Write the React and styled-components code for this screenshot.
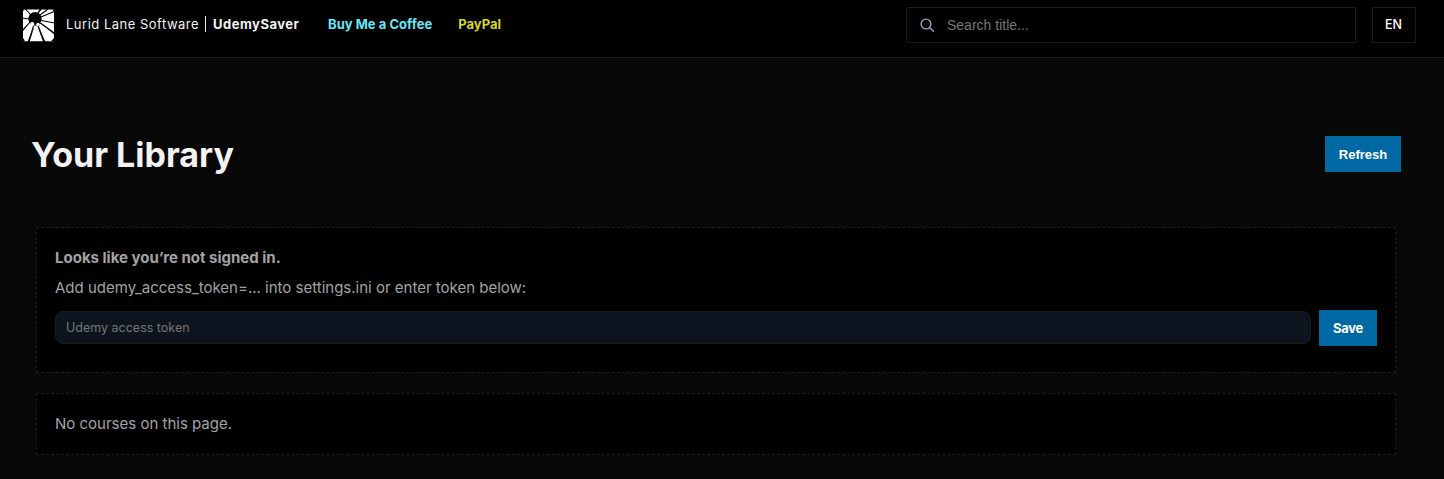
import React from "react";
import styled, { createGlobalStyle } from "styled-components";

const GlobalStyle = createGlobalStyle`
  * { box-sizing: border-box; }
  body {
    margin: 0;
    background: #080808;
    color: #f2f2f2;
    font-family: Inter, "Liberation Sans", sans-serif;
  }
`;

const Page = styled.div`
  min-height: 479px;
  overflow: hidden;
`;

const Header = styled.header`
  display: flex;
  align-items: flex-start;
  height: 58px;
  padding: 7px 28px 0 22px;
  background: #000;
  border-bottom: 1px solid #1a1a1a;
`;

const Brand = styled.div`
  display: flex;
  align-items: center;
  height: 34px;
  font-size: 13px;
  line-height: 18px;
  white-space: nowrap;
`;

const Logo = styled.svg`
  width: 34px;
  height: 34px;
  margin: 2px 10px 0 0;
`;

const Company = styled.span`
  width: 139px;
  letter-spacing: 0.5px;
`;

const Divider = styled.span`
  width: 1px;
  height: 16px;
  margin-right: 7px;
  background: #e8e8e8;
`;

const Product = styled.strong`
  width: 115px;
  font-weight: 700;
  letter-spacing: 0.5px;
`;

const HeaderLink = styled.a`
  position: relative;
  margin-right: 26px;
  color: ${(p) => p.$color};
  font-weight: 700;
  letter-spacing: 0.03px;
  text-decoration: none;
`;

const SearchBox = styled.label`
  display: flex;
  align-items: center;
  width: 450px;
  height: 36px;
  margin-left: auto;
  padding-left: 13px;
  border: 1px solid #1a1a1a;
  border-radius: 1px;
`;

const SearchIcon = styled.svg`
  width: 15px;
  height: 15px;
  margin-right: 12px;
`;

const SearchInput = styled.input`
  flex: 1;
  padding: 0;
  border: 0;
  outline: 0;
  background: transparent;
  color: #f2f2f2;
  font: 14px "Liberation Sans", Arial, sans-serif;
  &::placeholder { color: #757575; }
`;

const LanguageButton = styled.button`
  width: 44px;
  height: 36px;
  margin-left: 16px;
  padding: 0 1px 2px 0;
  border: 1px solid #1a1a1a;
  background: #000;
  color: #fff;
  font: 500 12.5px Inter, sans-serif;
`;

const Main = styled.main`
  padding: 78px 43px 0 31px;
`;

const TitleRow = styled.div`
  display: flex;
  align-items: center;
  justify-content: space-between;
  height: 36px;
`;

const Title = styled.h1`
  margin: 2px 0 0;
  font-size: 34px;
  font-weight: 700;
  line-height: 40px;
`;

const ActionButton = styled.button`
  flex: none;
  width: ${(p) => p.$width}px;
  height: 36px;
  padding: 0;
  border: 0;
  background: #0069a3;
  color: #fff;
  font: 700 13px ${(p) => p.$font}, sans-serif;
  letter-spacing: ${(p) => p.$tracking || 0}px;
`;

const Cards = styled.div`
  display: grid;
  gap: 20px;
  margin: 55px 5px 0;
`;

const Card = styled.section`
  height: ${(p) => p.$height}px;
  padding: 20px 18px;
  border: 1px dashed #1d1d1d;
  background: #000;
  color: #a3a3a3;
  font-size: 15px;
  line-height: 20px;
`;

const CardText = styled.p`
  margin: 0;
  font-weight: ${(p) => (p.$bold ? 700 : 400)};
  & + & { margin-top: 10px; }
`;

const TokenRow = styled.div`
  display: flex;
  align-items: flex-start;
  gap: 8px;
  margin-top: 12px;
`;

const TokenInput = styled.input`
  flex: 1;
  height: 33px;
  margin-top: 1px;
  padding: 0 10px;
  border: 1px solid #1a1a1a;
  border-radius: 8px;
  outline: 0;
  background: #0d1420;
  color: #f2f2f2;
  font: 12.5px Inter, sans-serif;
  &::placeholder { color: #757575; }
`;

export default function App() {
  return (
    <>
      <GlobalStyle />
      <Page>
        <Header>
          <Brand>
            <Logo viewBox="0 0 34 34">
              <path fill="#fff" d="M1 1.5H32V33.3H1Z" />
              <g stroke="#000" strokeWidth="1.1">
                <path d="M9 7 3.5 1M16 5 18.5 1M18 7 26 1M19 9 32 3.5M19 12.5 33 15M17 14 33 26M15 15 22.5 34M12.5 15 6.5 34M8 14 1 22M7 11 0 10" />
              </g>
              <path d="M16 6 20 1h-2ZM18 14l15 13v-2ZM15 17l6.2 17h2.3ZM12.5 18 5.5 34h2ZM8 14 1 21v2Z" />
              <circle cx="13" cy="10.7" r="6.7" />
              <path d="M9 14h8.5v4H16l-3-1-3 1H9Z" />
              <circle cx="10.2" cy="16.2" r="2.1" fill="#fff" />
              <circle cx="16" cy="16.4" r="1.7" fill="#fff" />
              <path d="M1 1.5h2L1 3ZM30 1.5h2v2ZM1 30l2 3.3H1ZM32 30v3.3h-3Z" />
            </Logo>
            <Company>Lurid Lane Software</Company>
            <Divider />
            <Product>UdemySaver</Product>
            <HeaderLink $color="#67e8f9">Buy Me a Coffee</HeaderLink>
            <HeaderLink $color="#d4d62d">PayPal</HeaderLink>
          </Brand>
          <SearchBox>
            <SearchIcon viewBox="0 0 15 15" fill="none" stroke="#94a3b8" strokeWidth="1.4" strokeLinecap="round">
              <circle cx="6" cy="6" r="4.9" />
              <path d="m9.8 9.8 3.5 3.5" />
            </SearchIcon>
            <SearchInput placeholder="Search title..." />
          </SearchBox>
          <LanguageButton>EN</LanguageButton>
        </Header>
        <Main>
          <TitleRow>
            <Title>Your Library</Title>
            <ActionButton $width={76} $font='"Liberation Sans"'>Refresh</ActionButton>
          </TitleRow>
          <Cards>
            <Card $height={146}>
              <CardText $bold>Looks like you’re not signed in.</CardText>
              <CardText>Add udemy_access_token=... into settings.ini or enter token below:</CardText>
              <TokenRow>
                <TokenInput placeholder="Udemy access token" />
                <ActionButton $width={58} $font="Inter" $tracking={-0.25}>Save</ActionButton>
              </TokenRow>
            </Card>
            <Card $height={62}>
              <CardText>No courses on this page.</CardText>
            </Card>
          </Cards>
        </Main>
      </Page>
    </>
  );
}
